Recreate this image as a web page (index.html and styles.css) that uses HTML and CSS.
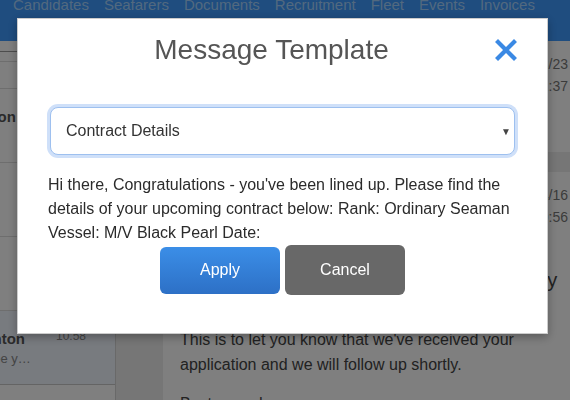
FILE: index.html
```html
<!DOCTYPE html>
<html lang="en">
<head>
<meta charset="utf-8">
<title>Message Template</title>
<link rel="stylesheet" href="styles.css">
</head>
<body>
<div class="app">
  <nav class="topnav">
    <ul class="nav-links">
      <li>Candidates</li>
      <li>Seafarers</li>
      <li>Documents</li>
      <li>Recruitment</li>
      <li>Fleet</li>
      <li>Events</li>
      <li>Invoices</li>
    </ul>
  </nav>
  <div class="workspace">
    <aside class="conv-col">
      <div class="conv-list">
        <div class="conv-tabs"></div>
        <div class="conv-filter"></div>
        <div class="conv-head"></div>
        <div class="conv-row">
          <div class="conv-top"><span class="conv-name">Jonathan Robertson</span><span class="conv-time">11:37</span></div>
          <div class="conv-preview">Thanks!</div>
        </div>
        <div class="conv-row">
          <div class="conv-top"><span class="conv-name">Mark Evans</span><span class="conv-time">09:12</span></div>
          <div class="conv-preview">Received.</div>
        </div>
        <div class="conv-row">
          <div class="conv-top"><span class="conv-name">Peter Hall</span><span class="conv-time">Fri</span></div>
          <div class="conv-preview">Noted.</div>
        </div>
        <div class="conv-row is-active">
          <div class="conv-top"><span class="conv-name">Christopher Thornton</span><span class="conv-time">10:58</span></div>
          <div class="conv-preview">Thank you so much, see you soon</div>
        </div>
      </div>
    </aside>
    <main class="thread">
      <article class="msg-card">
        <div class="msg-head">
          <div class="msg-sender">Crewing Office</div>
          <div class="msg-meta"><span>03/23</span><span>11:37</span></div>
        </div>
        <p class="msg-line">Your documents have been received.</p>
      </article>
      <article class="msg-card">
        <div class="msg-head">
          <div class="msg-sender">Crewing Office</div>
          <div class="msg-meta"><span>04/16</span><span>10:56</span></div>
        </div>
        <h3 class="msg-subject">Your application was received successfully</h3>
        <p class="msg-body">This is to let you know that we've received your application and we will follow up shortly.</p>
        <p class="msg-body">Best regards</p>
      </article>
    </main>
  </div>
</div>

<div class="backdrop">
  <div class="modal" role="dialog" aria-labelledby="modal-title">
    <div class="modal-header">
      <h2 class="modal-title" id="modal-title">Message Template</h2>
      <button class="close-btn" aria-label="Close">
        <svg width="22" height="22" viewBox="0 0 22 22"><path d="M3 3 L19 19 M19 3 L3 19" stroke="#3a89e4" stroke-width="4.2" stroke-linecap="square" fill="none"/></svg>
      </button>
    </div>
    <div class="select">
      <span class="select-value">Contract Details</span>
      <span class="select-caret">&#9660;</span>
    </div>
    <p class="template-text">Hi there, Congratulations - you've been lined up. Please find the details of your upcoming contract below: Rank: Ordinary Seaman Vessel: M/V Black Pearl Date:</p>
    <div class="actions">
      <button class="btn btn-apply">Apply</button>
      <button class="btn btn-cancel">Cancel</button>
    </div>
  </div>
</div>
</body>
</html>
```
FILE: styles.css
```css
html, body {
  margin: 0;
  padding: 0;
  width: 570px;
  height: 400px;
  overflow: hidden;
}

body {
  font-family: "Liberation Sans", Arial, sans-serif;
  color: #333;
  background: #fff;
}

.app {
  display: flex;
  flex-direction: column;
  height: 400px;
}

/* top navigation */
.topnav {
  height: 41px;
  background: #3e9afe;
  flex: none;
  overflow: hidden;
}

.nav-links {
  list-style: none;
  margin: -2px 0 0;
  padding: 0 0 0 13px;
  display: flex;
  gap: 15px;
  font-size: 15px;
  line-height: 14px;
  color: #a4d2ff;
  white-space: nowrap;
}

/* workspace */
.workspace {
  display: flex;
  flex: 1;
  min-height: 0;
}

.conv-col {
  width: 115px;
  flex: none;
  overflow: hidden;
  background: #fff;
  border-right: 1px solid #d2d2d2;
}

.conv-list {
  width: 260px;
  margin-left: -145px;
}

.conv-tabs {
  height: 10px;
  border-bottom: 1px solid #9a9a9a;
}

.conv-filter {
  height: 9px;
  border-bottom: 1px solid #dcdcdc;
}

.conv-head {
  height: 26px;
  border-bottom: 1px solid #dcdcdc;
}

.conv-row {
  height: 74px;
  box-sizing: border-box;
  padding: 18px 29px 0 15px;
  border-bottom: 1px solid #dcdcdc;
}

.conv-row.is-active {
  background: #f1f6ff;
  border-bottom-color: #c8c8c8;
}

.conv-top {
  display: flex;
  justify-content: space-between;
  align-items: flex-start;
}

.conv-name {
  font-weight: bold;
  font-size: 15px;
  line-height: 20px;
  color: #555;
  white-space: nowrap;
}

.conv-time {
  font-size: 12px;
  line-height: 14px;
  color: #8a8a8a;
}

.conv-preview {
  margin: 1px 0 0 -4px;
  width: 165px;
  font-size: 13px;
  line-height: 18px;
  color: #888;
  white-space: nowrap;
  overflow: hidden;
  text-overflow: ellipsis;
}

/* message thread */
.thread {
  flex: 1;
  background: #ededed;
  padding-left: 47px;
  display: flex;
  flex-direction: column;
  gap: 20px;
  min-width: 0;
}

.msg-card {
  background: #fff;
  padding: 12px 2px 12px 17px;
  flex: none;
}

.msg-head {
  display: flex;
  justify-content: space-between;
}

.msg-sender {
  font-size: 15px;
  font-weight: bold;
  color: #555;
  line-height: 22px;
}

.msg-meta {
  display: flex;
  flex-direction: column;
  align-items: flex-end;
  font-size: 14px;
  line-height: 22px;
  color: #777;
}

.msg-line {
  margin: 18px 0 0;
  font-size: 16px;
  line-height: 25px;
  color: #444;
}

.msg-subject {
  margin: 40px 0 0;
  font-size: 20px;
  line-height: 24px;
  font-weight: normal;
  color: #444;
  white-space: nowrap;
}

.msg-body {
  margin: 35px 0 0;
  width: 372px;
  font-size: 16px;
  line-height: 25px;
  color: #444;
}

.msg-body + .msg-body {
  margin-top: 14px;
}

/* modal */
.backdrop {
  position: fixed;
  inset: 0;
  background: rgba(0, 0, 0, 0.5);
}

.modal {
  position: absolute;
  top: 18px;
  left: 17px;
  width: 531px;
  box-sizing: border-box;
  padding: 14px 30px 38px;
  background: #fff;
  border: 1px solid rgba(0, 0, 0, 0.2);
  box-shadow: 0 3px 9px rgba(0, 0, 0, 0.3);
}

.modal-header {
  display: flex;
  align-items: center;
  height: 34px;
}

.modal-title {
  flex: 1;
  margin: 0;
  text-align: center;
  font-size: 28px;
  line-height: 34px;
  font-weight: normal;
  color: #555;
}

.close-btn {
  width: 22px;
  height: 22px;
  padding: 0;
  border: 0;
  background: none;
  display: flex;
  cursor: pointer;
}

.select {
  margin: 40px 2px 18px;
  height: 48px;
  box-sizing: border-box;
  border: 1px solid #9ec0ef;
  border-radius: 8px;
  box-shadow: 0 0 0 3px #cfe0f9;
  display: flex;
  align-items: center;
  justify-content: space-between;
  padding: 0 3px 0 15px;
  background: #fff;
}

.select-value {
  font-size: 16px;
  color: #333;
}

.select-caret {
  font-size: 10px;
  color: #444;
}

.template-text {
  margin: 0;
  font-size: 16px;
  line-height: 24px;
  color: #2b2b2b;
}

.actions {
  display: flex;
  justify-content: center;
  align-items: center;
  gap: 5px;
  height: 50px;
}

.btn {
  width: 120px;
  border: 0;
  border-radius: 6px;
  font-family: "Liberation Sans", Arial, sans-serif;
  font-size: 16px;
  color: #fff;
  padding: 0;
  cursor: pointer;
}

.btn-apply {
  height: 47px;
  background: linear-gradient(#3b8ee7, #2d70c6);
}

.btn-cancel {
  height: 50px;
  background: #686868;
}
```
